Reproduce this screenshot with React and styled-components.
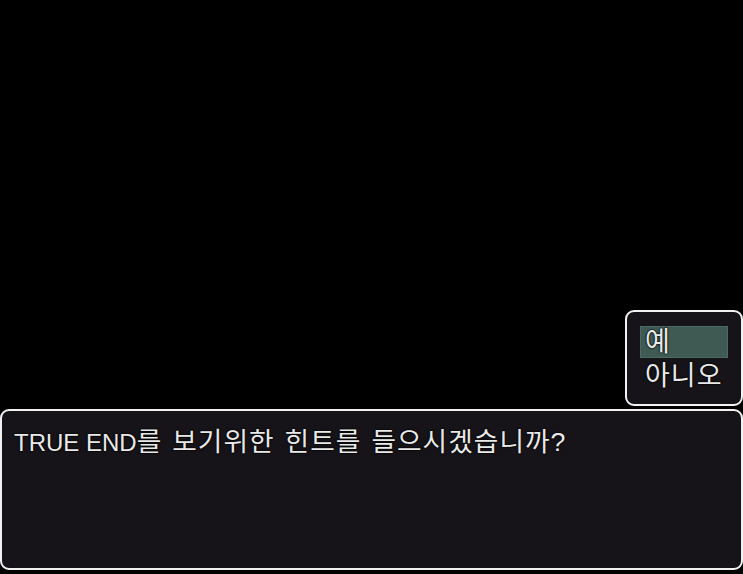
import React from "react";
import styled, { createGlobalStyle } from "styled-components";

const choices = ["예", "아니오"];

export default function App() {
  return (
    <>
      <Global />
      <Screen>
        <ChoiceWindow>
          {choices.map((c, i) => (
            <Choice key={c} selected={i === 0}>{c}</Choice>
          ))}
        </ChoiceWindow>
        <MessageWindow>
          <Line>
            TRUE END<Ko>를 보기위한 힌트를 들으시겠습니까?</Ko>
          </Line>
        </MessageWindow>
      </Screen>
    </>
  );
}

const Global = createGlobalStyle`
  html, body { margin: 0; padding: 0; background: #000; overflow: hidden; }
  * { box-sizing: border-box; }
`;

const Screen = styled.div`
  width: 743px; height: 574px; background: #000;
  display: flex; flex-direction: column; align-items: flex-end; justify-content: flex-end;
  padding-bottom: 4px; gap: 3px;
  font-family: "Liberation Sans", "Noto Sans CJK KR", sans-serif;
  color: #e9e9e9;
  text-shadow: 0 0 2px #000, 0 0 2px #000;
`;

const ChoiceWindow = styled.div`
  width: 118px; height: 96px;
  background: #161418; border: 2px solid #f2f2f2; border-radius: 9px;
  padding: 14px 13px 0 13px;
  display: flex; flex-direction: column; gap: 2px;
`;

const Choice = styled.div`
  height: 32px; padding-left: 5px;
  font-size: 27px; line-height: 32px; letter-spacing: 1px;
  background: ${p => p.selected ? "#3f5a53" : "transparent"};
  box-shadow: ${p => p.selected ? "inset 0 0 0 1px #4c6a62" : "none"};
`;

const MessageWindow = styled.div`
  width: 743px; height: 161px;
  background: #161418; border: 2px solid #f2f2f2; border-radius: 9px;
  padding: 14px 12px;
`;

const Line = styled.div`
  font-size: 24px; line-height: 34px; white-space: nowrap;
`;

const Ko = styled.span`
  font-size: 26.7px; word-spacing: 1.5px; letter-spacing: 1.05px;
`;
